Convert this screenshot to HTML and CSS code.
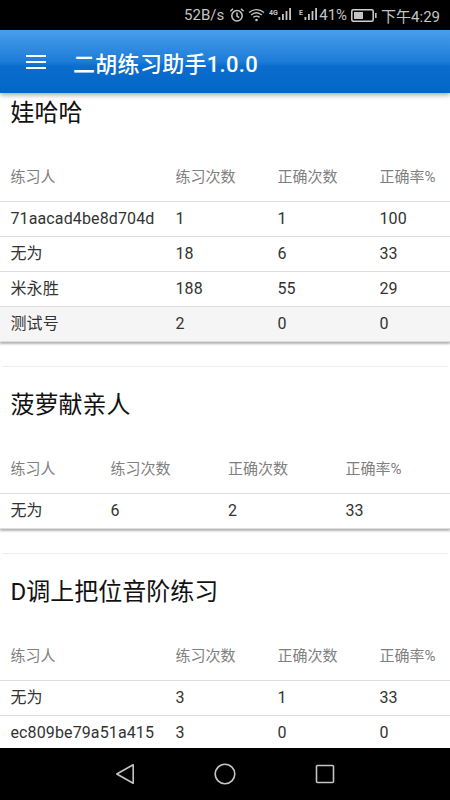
FILE: index.html
```html
<!DOCTYPE html>
<html lang="zh-CN">
<head>
    <meta charset="UTF-8">
    <meta name="viewport" content="width=device-width, initial-scale=1.0">
    <title>二胡练习助手</title>
    <link rel="stylesheet" href="styles.css">
</head>
<body>

<div class="phone">
    <div class="status-bar">
        <span class="speed">52B/s</span>
        <svg class="icon-alarm" width="16" height="16" viewBox="0 0 16 16" fill="none" stroke="#c4c4c4" stroke-width="1.5">
            <circle cx="8" cy="8.8" r="5.2"/>
            <path d="M8 5.6V9L10.2 10.6M1.4 4.2L4 1.8M14.6 4.2L12 1.8"/>
        </svg>
        <svg class="icon-wifi" width="17" height="14" viewBox="0 0 17 14" fill="none" stroke="#c4c4c4" stroke-width="1.4">
            <path d="M1 4.6C5.4 .6 11.6 .6 16 4.6M3.2 7C6.4 4.2 10.6 4.2 13.8 7M5.4 9.4C7.2 7.9 9.8 7.9 11.6 9.4"/>
            <circle cx="8.5" cy="12" r="1.3" fill="#c4c4c4" stroke="none"/>
        </svg>
        <svg class="icon-signal sim-one" width="22" height="16" viewBox="0 0 22 16" fill="#c4c4c4">
            <text x="0" y="8" class="net-label">4G</text>
            <rect x="9.5" y="10" width="1.8" height="3"/>
            <rect x="13" y="7" width="1.8" height="6"/>
            <rect x="16.6" y="4" width="1.8" height="9"/>
            <rect x="20.2" y="1" width="1.8" height="12"/>
        </svg>
        <svg class="icon-signal" width="18" height="16" viewBox="0 0 18 16" fill="#c4c4c4">
            <text x="0" y="8" class="net-label">E</text>
            <rect x="5.5" y="10" width="1.8" height="3"/>
            <rect x="9" y="7" width="1.8" height="6"/>
            <rect x="12.6" y="4" width="1.8" height="9"/>
            <rect x="16.2" y="1" width="1.8" height="12"/>
        </svg>
        <span class="battery-pct">41%</span>
        <svg class="icon-battery" width="26" height="13" viewBox="0 0 26 13" fill="none">
            <rect x=".8" y=".8" width="21.4" height="11.4" rx="1.5" stroke="#d0d0d0" stroke-width="1.5"/>
            <rect x="3" y="3" width="9" height="7" fill="#c4c4c4"/>
            <rect x="24" y="4" width="1.6" height="5" fill="#c4c4c4"/>
        </svg>
        <span class="clock">下午4:29</span>
    </div>

    <header class="app-header">
        <svg class="menu-icon" width="20" height="14" viewBox="0 0 20 14" fill="#fff">
            <rect x="0" y="0" width="20" height="2"/>
            <rect x="0" y="6" width="20" height="2"/>
            <rect x="0" y="12" width="20" height="2"/>
        </svg>
        <div class="app-title">二胡练习助手1.0.0</div>
    </header>

    <main class="content">
        <section class="lesson">
            <h2>娃哈哈</h2>
            <table class="score-table">
                <colgroup><col class="col-a"><col class="col-b"><col class="col-c"><col></colgroup>
                <thead>
                    <tr><th>练习人</th><th>练习次数</th><th>正确次数</th><th>正确率%</th></tr>
                </thead>
                <tbody>
                    <tr><td>71aacad4be8d704d</td><td>1</td><td>1</td><td>100</td></tr>
                    <tr><td>无为</td><td>18</td><td>6</td><td>33</td></tr>
                    <tr><td>米永胜</td><td>188</td><td>55</td><td>29</td></tr>
                    <tr class="active-row"><td>测试号</td><td>2</td><td>0</td><td>0</td></tr>
                </tbody>
            </table>
        </section>
        <hr>
        <section class="lesson">
            <h2>菠萝献亲人</h2>
            <table class="score-table short">
                <colgroup><col class="col-a"><col class="col-b"><col class="col-c"><col></colgroup>
                <thead>
                    <tr><th>练习人</th><th>练习次数</th><th>正确次数</th><th>正确率%</th></tr>
                </thead>
                <tbody>
                    <tr><td>无为</td><td>6</td><td>2</td><td>33</td></tr>
                </tbody>
            </table>
        </section>
        <hr>
        <section class="lesson">
            <h2>D调上把位音阶练习</h2>
            <table class="score-table">
                <colgroup><col class="col-a"><col class="col-b"><col class="col-c"><col></colgroup>
                <thead>
                    <tr><th>练习人</th><th>练习次数</th><th>正确次数</th><th>正确率%</th></tr>
                </thead>
                <tbody>
                    <tr><td>无为</td><td>3</td><td>1</td><td>33</td></tr>
                    <tr><td>ec809be79a51a415</td><td>3</td><td>0</td><td>0</td></tr>
                </tbody>
            </table>
        </section>
    </main>

    <nav class="nav-bar">
        <svg width="20" height="22" viewBox="0 0 20 22" fill="none" stroke="#c4c4c4" stroke-width="1.6" stroke-linejoin="round">
            <path d="M18.2 1.8V20.2L1.8 11Z"/>
        </svg>
        <svg width="22" height="22" viewBox="0 0 22 22" fill="none" stroke="#c4c4c4" stroke-width="1.6">
            <circle cx="11" cy="11" r="9.8"/>
        </svg>
        <svg width="20" height="20" viewBox="0 0 20 20" fill="none" stroke="#c4c4c4" stroke-width="1.6" stroke-linejoin="round">
            <rect x="1.5" y="1.5" width="17" height="17" rx="1"/>
        </svg>
    </nav>
</div>

</body>
</html>
```

FILE: styles.css
```css
* {
    box-sizing: border-box;
}

body {
    margin: 0;
    padding: 0;
    background: #fff;
    font-family: Roboto, "Noto Sans CJK SC", sans-serif;
}

.phone {
    width: 450px;
    height: 800px;
    display: flex;
    flex-direction: column;
    overflow: hidden;
}

/* status bar */
.status-bar {
    height: 30px;
    flex: none;
    background: #000;
    color: #c4c4c4;
    font-size: 15px;
    display: flex;
    align-items: center;
    justify-content: flex-end;
    padding-right: 10px;
}

.speed {
    margin-right: 5px;
}

.icon-alarm {
    margin-right: 3px;
}

.icon-wifi {
    margin-right: 4px;
}

.icon-signal {
    margin-right: 2px;
}

.icon-signal.sim-one {
    margin-right: 8px;
}

.net-label {
    font-size: 7px;
    font-weight: bold;
}

.battery-pct {
    margin-right: 4px;
}

.icon-battery {
    margin-right: 4px;
}

/* header */
.app-header {
    height: 63px;
    flex: none;
    display: flex;
    align-items: center;
    padding-left: 26px;
    background: linear-gradient(#4a9eec 0, #1c7cd8 50%, #0a6ccb 58%, #0367c8 100%);
    box-shadow: 0 2px 5px rgba(0, 0, 0, .35);
    position: relative;
    z-index: 2;
}

.app-title {
    margin-left: 27px;
    color: #fff;
    font-size: 22px;
    font-weight: 500;
    letter-spacing: .3px;
}

/* content */
.content {
    flex: 1;
    min-height: 0;
    overflow: hidden;
    background: #fff;
    padding-top: 3px;
}

.lesson h2 {
    margin: 0;
    padding: 0 10.5px;
    height: 34px;
    line-height: 34px;
    font-size: 24px;
    font-weight: 400;
    color: #111;
}

hr {
    margin: 24px 2px 21.7px;
    border: 0;
    border-top: 1px solid #eee;
}

.score-table {
    width: 100%;
    border-collapse: collapse;
    table-layout: fixed;
    margin-top: 21px;
    font-size: 16px;
    box-shadow: 0 2px 2px rgba(0, 0, 0, .3);
}

.col-a {
    width: 165px;
}

.col-b,
.col-c {
    width: 102px;
}

.short .col-a {
    width: 100px;
}

.short .col-b,
.short .col-c {
    width: 117.5px;
}

.score-table th {
    height: 50px;
    padding: 2px 0 0 10.5px;
    text-align: left;
    font-size: 15px;
    line-height: 20px;
    font-weight: 400;
    color: #808080;
    border-bottom: 1px solid #ddd;
}

.score-table td {
    height: 35px;
    padding: 0 0 0 10.5px;
    line-height: 20px;
    letter-spacing: .12px;
    color: #333;
    border-bottom: 1px solid #ddd;
    white-space: nowrap;
}

.score-table .active-row td {
    background: #f5f5f5;
}

/* nav bar */
.nav-bar {
    height: 52px;
    flex: none;
    background: #000;
    display: flex;
    align-items: center;
    justify-content: center;
    gap: 79px;
}
```
